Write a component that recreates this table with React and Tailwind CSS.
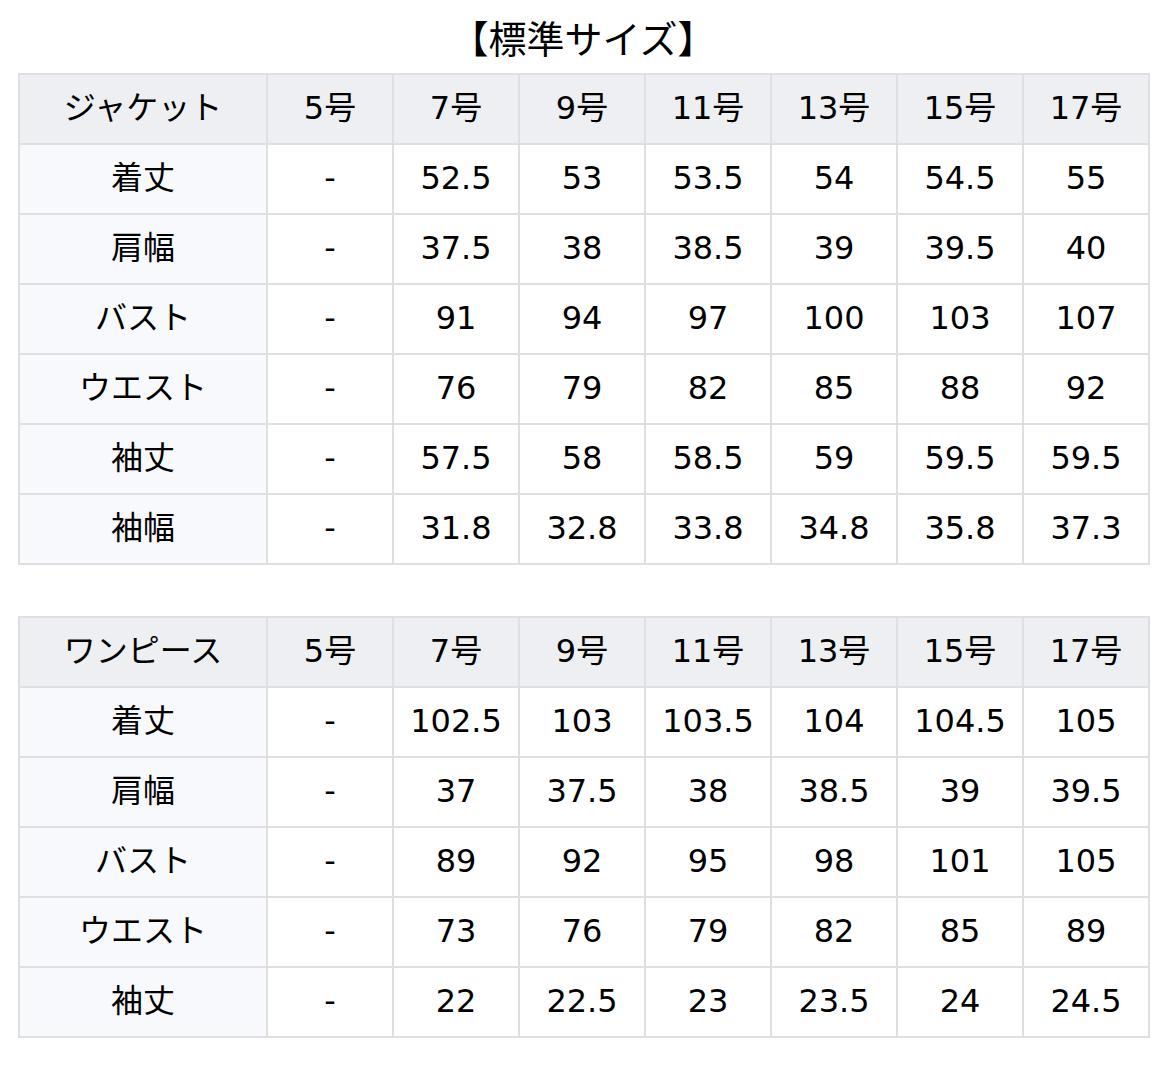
import React from "react";

const cols = ["5号", "7号", "9号", "11号", "13号", "15号", "17号"];

const jacket = [
  ["着丈", "-", "52.5", "53", "53.5", "54", "54.5", "55"],
  ["肩幅", "-", "37.5", "38", "38.5", "39", "39.5", "40"],
  ["バスト", "-", "91", "94", "97", "100", "103", "107"],
  ["ウエスト", "-", "76", "79", "82", "85", "88", "92"],
  ["袖丈", "-", "57.5", "58", "58.5", "59", "59.5", "59.5"],
  ["袖幅", "-", "31.8", "32.8", "33.8", "34.8", "35.8", "37.3"],
];

const onepiece = [
  ["着丈", "-", "102.5", "103", "103.5", "104", "104.5", "105"],
  ["肩幅", "-", "37", "37.5", "38", "38.5", "39", "39.5"],
  ["バスト", "-", "89", "92", "95", "98", "101", "105"],
  ["ウエスト", "-", "73", "76", "79", "82", "85", "89"],
  ["袖丈", "-", "22", "22.5", "23", "23.5", "24", "24.5"],
];

function SizeTable({ title, rows }) {
  return (
    <table className="w-[1132px] border-collapse table-fixed text-[32px] leading-none text-black">
      <colgroup>
        <col className="w-[248px]" />
        {cols.map((c) => (
          <col key={c} className="w-[126px]" />
        ))}
      </colgroup>
      <thead>
        <tr className="h-[70px] bg-[#eeeff3]">
          <th className="border-2 border-[#dfdfe1] font-normal text-center pb-[2px]">{title}</th>
          {cols.map((c) => (
            <th key={c} className="border-2 border-[#dfdfe1] font-normal text-center pb-[2px]">
              {c}
            </th>
          ))}
        </tr>
      </thead>
      <tbody>
        {rows.map((r) => (
          <tr key={r[0]} className="h-[70px]">
            {r.map((v, i) => (
              <td
                key={i}
                className={
                  i === 0
                    ? "border-2 border-[#dfdfe1] text-center pb-[2px] bg-[#f8f9fd]"
                    : "border-2 border-[#dfdfe1] text-center pb-[2px] bg-white"
                }
              >
                {v}
              </td>
            ))}
          </tr>
        ))}
      </tbody>
    </table>
  );
}

export default function App() {
  return (
    <div
      className="w-[1160px] h-[1066px] bg-white px-[18px] pt-[8px]"
      style={{ fontFamily: '"DejaVu Sans", "Noto Sans CJK JP", sans-serif' }}
    >
      <h2 className="text-[38px] leading-[64px] text-center text-black font-normal pl-[6px]">
        【標準サイズ】
      </h2>
      <div className="flex flex-col gap-[51px] mt-[1px]">
        <SizeTable title="ジャケット" rows={jacket} />
        <SizeTable title="ワンピース" rows={onepiece} />
      </div>
    </div>
  );
}
